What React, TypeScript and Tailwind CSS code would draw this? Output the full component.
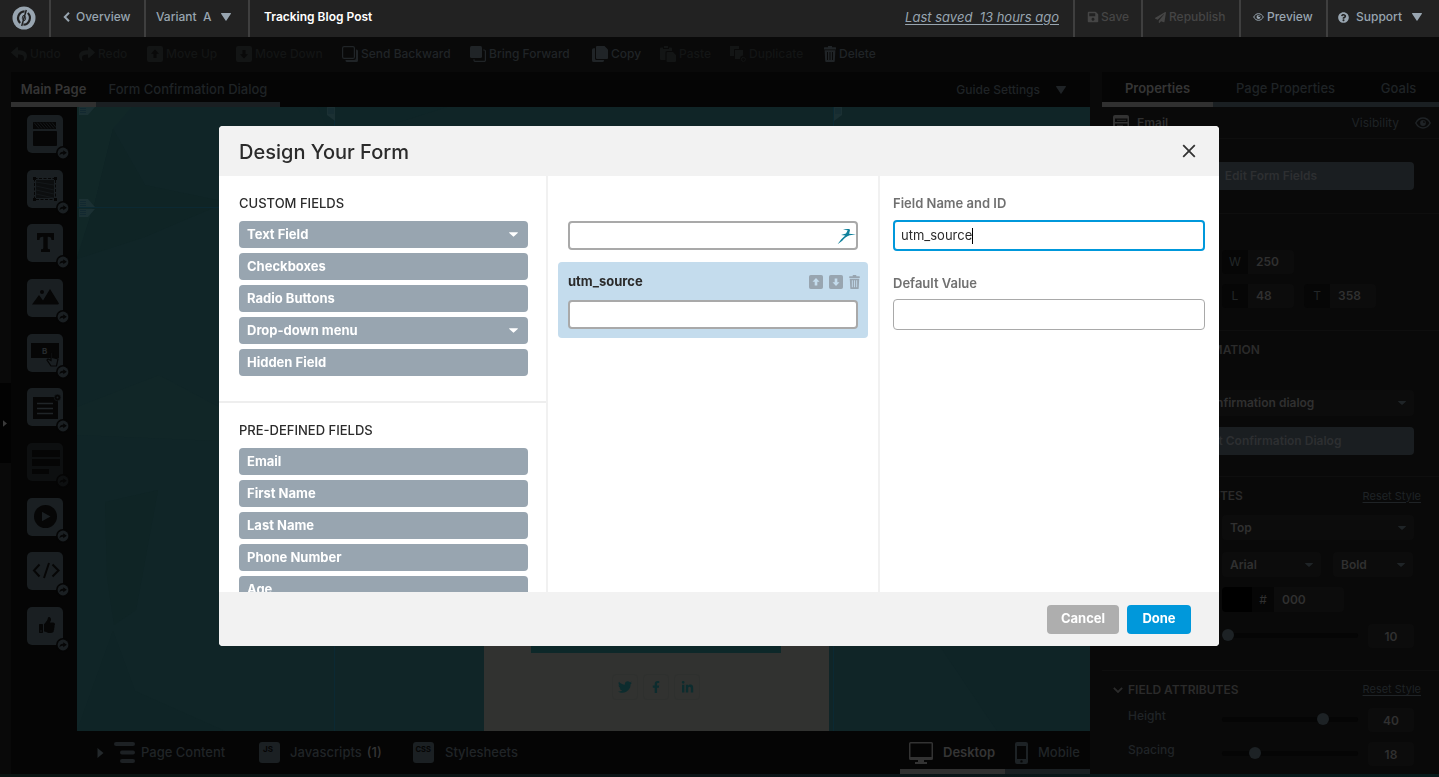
import type { ReactNode } from "react";
import {
  FaFacebookF,
  FaLinkedinIn,
  FaPaperPlane,
  FaQuestionCircle,
  FaReply,
  FaSave,
  FaShare,
  FaThumbsUp,
  FaTwitter,
} from "react-icons/fa";

type IconProps = { className?: string };

const TriangleDown = ({ className = "" }: IconProps) => (
  <svg viewBox="0 0 10 8" className={className} fill="currentColor" aria-hidden="true">
    <path d="M0.5 0h9a.5.5 0 0 1 .4.8L5.6 7.3a.7.7 0 0 1-1.2 0L.1.8A.5.5 0 0 1 .5 0Z" />
  </svg>
);

const CaretDown = ({ className = "" }: IconProps) => (
  <svg viewBox="0 0 10 5" className={className} fill="currentColor" aria-hidden="true">
    <path d="M.6 0h8.8a.5.5 0 0 1 .3.9L5.4 4.8a.6.6 0 0 1-.8 0L.3.9A.5.5 0 0 1 .6 0Z" />
  </svg>
);

const TriangleRight = ({ className = "" }: IconProps) => (
  <svg viewBox="0 0 6 10" className={className} fill="currentColor" aria-hidden="true">
    <path d="M0 0v10l6-5Z" />
  </svg>
);

const Logo = () => (
  <svg viewBox="0 0 24 24" className="size-6" aria-hidden="true">
    <circle cx="12" cy="12" r="11.5" fill="#98a5b0" />
    <path d="M12.6 5.3a6.800 6.800 0 0 0-4.400 11.700M11.400 18.700a6.800 6.800 0 0 0 4.400-11.700" fill="none" stroke="#222" strokeWidth="2.200" />
    <path d="M14.300 4 9.700 20" stroke="#222" strokeWidth="1.500" />
    <path d="M11.800 9c-1.300 1.200-1.800 3-1.200 4.600M12.200 15c1.300-1.200 1.800-3 1.200-4.600" fill="none" stroke="#222" strokeWidth="1" />
  </svg>
);

const Trash = ({ className = "" }: IconProps) => (
  <svg viewBox="0 0 12 16" className={className} fill="currentColor" aria-hidden="true">
    <path d="M4 0h4v1.300h3.500a.5.500 0 0 1 .5.500V3.500H0V1.800a.5.500 0 0 1 .5-.5H4Z" />
    <path fillRule="evenodd" d="M.6 4.300h10.800L10.800 15a1 1 0 0 1-1 1H2.200a1 1 0 0 1-1-1ZM3 6v8h1V6Zm2.500 0v8h1V6ZM8 6v8h1V6Z" />
  </svg>
);

const ArrowBox = ({ className = "", down = false }: IconProps & { down?: boolean }) => (
  <svg viewBox="0 0 16 16" className={className} aria-hidden="true">
    <path
      fill="currentColor"
      fillRule="evenodd"
      d={
        down
          ? "M2 0h12a2 2 0 0 1 2 2v12a2 2 0 0 1-2 2H2a2 2 0 0 1-2-2V2a2 2 0 0 1 2-2Zm4.500 4v4.200H4L8 12.500l4-4.300H9.500V4Z"
          : "M2 0h12a2 2 0 0 1 2 2v12a2 2 0 0 1-2 2H2a2 2 0 0 1-2-2V2a2 2 0 0 1 2-2Zm4.500 12V7.800H4L8 3.500l4 4.300H9.500V12Z"
      }
    />
  </svg>
);

const SendBackward = () => (
  <svg viewBox="0 0 16 16" className="size-4" aria-hidden="true">
    <path d="M14 3.500h.5A1.500 1.500 0 0 1 16 5v9.500a1.500 1.500 0 0 1-1.500 1.500H5a1.500 1.500 0 0 1-1.500-1.500V14H12a2 2 0 0 0 2-2Z" fill="currentColor" />
    <rect x=".6" y=".6" width="11.800" height="11.800" rx="1.500" fill="none" stroke="currentColor" strokeWidth="1.200" />
  </svg>
);

const BringForward = () => (
  <svg viewBox="0 0 16 16" className="size-4" aria-hidden="true">
    <rect width="12" height="12" rx="1.500" fill="currentColor" />
    <path d="M13.200 4h1a1.200 1.200 0 0 1 1.200 1.200v9a1.200 1.200 0 0 1-1.200 1.200h-9A1.200 1.200 0 0 1 4 14.200v-1" fill="none" stroke="currentColor" strokeWidth="1.200" />
  </svg>
);

const CopyIcon = () => (
  <svg viewBox="0 0 16 16" className="size-4" fill="currentColor" aria-hidden="true">
    <path d="M5 0h7.500L16 3.500V12a1 1 0 0 1-1 1H5a1 1 0 0 1-1-1V1a1 1 0 0 1 1-1Z" />
    <path d="M3 2.200H1.500A1.500 1.500 0 0 0 0 3.700v10.800A1.500 1.500 0 0 0 1.500 16h9a1.500 1.500 0 0 0 1.500-1.500V14H4.500A1.500 1.500 0 0 1 3 12.500Z" />
  </svg>
);

const PasteIcon = () => (
  <svg viewBox="0 0 16 16" className="size-4" fill="currentColor" aria-hidden="true">
    <path d="M1 1.500h2V3h6V1.500h2a1 1 0 0 1 1 1V5H7a1.500 1.500 0 0 0-1.500 1.500V14H1a1 1 0 0 1-1-1V2.500a1 1 0 0 1 1-1Z" />
    <path d="M4 0h4v2H4ZM7.500 6H13l3 3v6a1 1 0 0 1-1 1H7.500a1 1 0 0 1-1-1V7a1 1 0 0 1 1-1Z" />
  </svg>
);

const DuplicateIcon = () => (
  <svg viewBox="0 0 16 16" className="size-4" fill="currentColor" aria-hidden="true">
    <path d="M0 0h9v3H5a1 1 0 0 0-1 1v6H0Z" />
    <path d="M5 4h8v5.500A3.500 3.500 0 0 0 10 13H5Z" />
    <circle cx="13.400" cy="13.400" r="2" fill="none" stroke="currentColor" />
  </svg>
);

const EyeIcon = ({ className = "" }: IconProps) => (
  <svg viewBox="0 0 16 12" className={className} aria-hidden="true">
    <path d="M.8 6C2.500 2.800 5 1 8 1s5.500 1.800 7.200 5C13.500 9.200 11 11 8 11S2.500 9.200.8 6Z" fill="none" stroke="currentColor" strokeWidth="1.500" />
    <circle cx="8" cy="6" r="2.900" fill="currentColor" />
    <path d="M8 6V3.800A2.200 2.200 0 0 1 10.200 6Z" fill="#111" />
  </svg>
);

const FormIcon = () => (
  <svg viewBox="0 0 16 16" className="size-4" aria-hidden="true">
    <rect width="16" height="16" rx="2" fill="#333" />
    <path d="M2 3.500h12.500V7H2ZM2 8.500h12.500V12H2Z" fill="#0a0a0a" />
    <path d="M4 5.300h9M4 10.300h6" stroke="#2a2a2a" />
  </svg>
);

const Swallow = () => (
  <svg viewBox="0 0 20 18" className="h-[18px] w-5" fill="#0f819c" aria-hidden="true">
    <path d="M7 2.700c1.800-.7 4-.9 5.900-.7l1.200.8-1 4L20 7.600l-6.400.7c-3 1.200-5.500 3.200-7.300 5.500L1.500 17.300c2.200-3.500 4.800-6.300 7.800-8.900L5 8.100l5-1.700 1.700-3.200c-1.600-.3-3.100-.4-4.700-.5Z" />
  </svg>
);

const barItem = "flex items-center text-xs font-medium";

function TopBar() {
  return (
    <header className="flex h-[37px] items-stretch bg-[#222] text-[#98a5b0]">
      <a href="#home" aria-label="Home" className="flex w-[49px] items-center justify-center pr-px pb-[2px]">
        <Logo />
      </a>
      <a href="#overview" className={`${barItem} w-[95px] gap-[6px] border-l-2 border-[#3f3f3f] pb-[3px] pl-3`}>
        <svg viewBox="0 0 7 10" className="h-[10px] w-[7px]" fill="none" stroke="currentColor" strokeWidth="2" aria-hidden="true">
          <path d="M6 .8 1.800 5 6 9.200" />
        </svg>
        Overview
      </a>
      <button type="button" className={`${barItem} w-[104px] justify-between border-l-2 border-[#3f3f3f] pr-[17px] pb-[3px] pl-[10px]`}>
        <span>Variant&nbsp; A</span>
        <TriangleDown className="h-2 w-[10px]" />
      </button>
      <h1 className="flex items-center border-l-2 border-[#3f3f3f] pb-[3px] pl-[14px] text-xs font-semibold text-white">Tracking Blog Post</h1>
      <div className="flex flex-1 items-center justify-end pr-[14px] pb-[2px]">
        <a href="#history" className="text-[13px] italic underline underline-offset-2">
          Last saved&nbsp; 13 hours ago
        </a>
      </div>
      <button type="button" disabled className={`${barItem} w-[68px] gap-[2px] border-l-2 border-[#3f3f3f] pb-[3px] pl-3 text-[#454545]`}>
        <FaSave className="size-3" />
        Save
      </button>
      <button type="button" disabled className={`${barItem} w-[98px] gap-[3px] border-l-2 border-[#3f3f3f] pb-[3px] pl-3 text-[#454545]`}>
        <FaPaperPlane className="size-[11px]" />
        Republish
      </button>
      <button type="button" className={`${barItem} w-[87px] gap-[3px] border-l-2 border-[#3f3f3f] pb-[3px] pl-3`}>
        <EyeIcon className="h-2 w-[11px]" />
        Preview
      </button>
      <button type="button" className={`${barItem} w-[113px] border-l-2 border-[#3f3f3f] pr-[17px] pb-[3px] pl-[10px]`}>
        <FaQuestionCircle className="size-[11px]" />
        <span className="ml-[7px] flex-1 text-left">Support</span>
        <TriangleDown className="h-2 w-[10px]" />
      </button>
    </header>
  );
}

const actions: { label: string; icon: ReactNode; width: string; off?: boolean }[] = [
  { label: "Undo", icon: <FaReply className="size-4" />, width: "w-[68px]", off: true },
  { label: "Redo", icon: <FaShare className="size-4" />, width: "w-[68px]", off: true },
  { label: "Move Up", icon: <ArrowBox className="size-4" />, width: "w-[89px]", off: true },
  { label: "Move Down", icon: <ArrowBox className="size-4" down />, width: "w-[106px]", off: true },
  { label: "Send Backward", icon: <SendBackward />, width: "w-32" },
  { label: "Bring Forward", icon: <BringForward />, width: "w-[122px]" },
  { label: "Copy", icon: <CopyIcon />, width: "w-[68px]" },
  { label: "Paste", icon: <PasteIcon />, width: "w-[70px]", off: true },
  { label: "Duplicate", icon: <DuplicateIcon />, width: "w-[94px]", off: true },
  { label: "Delete", icon: <Trash className="h-4 w-3" />, width: "w-[68px]" },
];

function ActionBar() {
  return (
    <nav aria-label="Edit" className="flex h-[35px] items-center pb-px pl-[11px]">
      {actions.map((a) => (
        <button
          key={a.label}
          type="button"
          disabled={a.off}
          className={`${a.width} ${a.off ? "text-[#131515]" : "text-[#202427]"} flex shrink-0 items-center gap-[3px] text-xs font-medium whitespace-nowrap`}
        >
          {a.icon}
          {a.label}
        </button>
      ))}
    </nav>
  );
}

const ink = "#060606";
const slate = "#1a1f22";

const tools: { label: string; off?: boolean; art: ReactNode }[] = [
  {
    label: "Section",
    art: (
      <>
        <rect x="6" y="7" width="23" height="7" fill={ink} />
        <path d="m7 7.500 5 6M10 7.500l5 6M13 7.500l5 6M16 7.500l5 6M19 7.500l5 6M22 7.500l5 6M25 7.500l4 5" stroke={slate} strokeWidth=".7" fill="none" />
        <rect x="6" y="16" width="24" height="15" rx="1" fill={ink} />
      </>
    ),
  },
  {
    label: "Box",
    art: (
      <>
        <rect x="9" y="10" width="18" height="18" fill="#0c0e0f" />
        <path d="m9 12 18 3M9 16l18 4M9 20l18 4M9 24l18 4" stroke={slate} strokeWidth=".6" />
        <rect x="7.500" y="8.500" width="21" height="21" fill="none" stroke={ink} strokeDasharray="3 1.500" />
        <path d="M6 7h3v3H6ZM27 7h3v3h-3ZM6 28h3v3H6ZM27 28h3v3h-3Z" fill={ink} />
      </>
    ),
  },
  {
    label: "Text",
    art: <path d="M10 9h17v7h-2.500c-.2-2.200-.8-3.200-3-3.200h-.8V24c0 1 .6 1.300 2.300 1.300V28h-9v-2.700c1.700 0 2.300-.3 2.300-1.300V12.800h-.8c-2.200 0-2.800 1-3 3.200H10Z" fill={ink} />,
  },
  {
    label: "Image",
    art: (
      <>
        <path d="m5 25.500 7-9.500 4 5.500L23 10l9 14.500-1 1Z" fill={ink} />
        <circle cx="15" cy="13" r="2" fill={ink} />
      </>
    ),
  },
  {
    label: "Button",
    art: (
      <>
        <rect x="4" y="9" width="28" height="15" fill={ink} />
        <text x="15" y="20" fontSize="8" fontWeight="700" fill="#262b2e">B</text>
        <path d="M24 18.500v8l-3-1.500-1 1 4 6h5.500l1.500-7-5.500-1.500v-5Z" fill={slate} stroke={ink} strokeWidth="1.200" />
      </>
    ),
  },
  {
    label: "Form",
    art: (
      <>
        <rect x="6" y="9" width="25" height="22" fill={ink} />
        <path d="M10 15.500h16M10 20.500h16M10 25.500h16" stroke="#202528" strokeWidth="1.600" />
        <circle cx="30.500" cy="9.500" r="3.300" fill={ink} stroke={slate} strokeWidth=".6" />
        <circle cx="30.500" cy="9.500" r="1" fill={slate} />
      </>
    ),
  },
  {
    label: "Form fields",
    off: true,
    art: <path d="M5 7h28v7H5ZM5 16h28v7H5ZM5 26h17v5H5Z" fill={ink} />,
  },
  {
    label: "Video",
    art: (
      <>
        <circle cx="18.500" cy="18.500" r="11.500" fill={ink} />
        <path d="M15 13.800v9.400l8.500-4.700Z" fill={slate} />
      </>
    ),
  },
  {
    label: "Custom HTML",
    art: <path d="M12.500 12.500 7 18.500l5.500 6M25.500 12.500l6 6-6 6M22 11l-5 15" stroke={ink} strokeWidth="2" fill="none" />,
  },
  { label: "Social", art: <FaThumbsUp x="12" y="10" width="15" height="16" color={ink} /> },
];

function ToolStrip() {
  return (
    <div className="w-[66px] shrink-0 pt-2 pl-4">
      <ul className="flex h-[530px] flex-col justify-between">
        {tools.map((t) => (
          <li key={t.label} className={`relative w-9 ${t.off ? "opacity-40" : ""}`}>
            <button type="button" aria-label={t.label} className="block h-[38px] w-9">
              <svg viewBox="0 0 36 38" className="h-[38px] w-9">
                <rect width="36" height="38" rx="5" fill={slate} />
                {t.art}
              </svg>
            </button>
            <svg viewBox="0 0 14 14" className="absolute -right-[7px] -bottom-[7px] size-[14px]" aria-hidden="true">
              <circle cx="7" cy="7" r="7" fill="#050505" />
              <circle cx="7" cy="7" r="5.400" fill={slate} />
              <path d="M3.500 9.300c0-2.500 1.500-3.600 3.700-3.600V4.200L10.800 6.800 7.200 9.200V7.800c-1.500 0-2.600.3-3.700 1.500Z" fill={ink} />
            </svg>
          </li>
        ))}
      </ul>
    </div>
  );
}

const GuideFlag = () => (
  <svg viewBox="0 0 16 8" className="h-2 w-4" aria-hidden="true">
    <path d="M0 0h16L9 8H0Z" fill="#1b3033" />
    <path d="M1 1.500h6M1 3.500h6M1 5.500h6" stroke="#122830" />
  </svg>
);

function Canvas() {
  return (
    <div className="relative flex min-w-0 flex-1 justify-center overflow-hidden bg-[#102527]">
      <svg viewBox="0 0 1013 624" preserveAspectRatio="none" className="absolute inset-0 size-full" aria-hidden="true">
        <path d="M0 0h55L36 22 18 95 0 150Z" fill="#112727" />
        <path d="M36 22 68 78 150 95 68 130 0 152 18 95Z" fill="#0f2425" />
        <path d="M0 300 82 268 142 300V334L0 328Z" fill="#112627" />
        <path d="m28 395 53-12-22 120-22 15L30 470Z" fill="#0f2425" />
        <path d="m36 524 22 60 90 40H0Z" fill="#0f2426" />
        <path d="M240 0h130l-60 19h-60Z" fill="#0f2527" />
        <path d="M850 520h163v104H920Z" fill="#0f2426" />
      </svg>
      <div className="absolute inset-x-0 top-[100px] border-t border-[#0b2933]" />
      <div className="absolute top-0 left-[2px]"><GuideFlag /></div>
      <div className="absolute top-[92px] left-[2px] -scale-y-100"><GuideFlag /></div>
      <div className="absolute top-[102px] left-[2px]"><GuideFlag /></div>
      <div className="relative flex w-[500px] flex-col items-end justify-end border-x border-[#0b2933] pr-1">
        <svg viewBox="0 0 8 14" className="absolute top-0 -left-[8px] h-[14px] w-2" aria-hidden="true">
          <path d="M0 0h8v14L0 8Z" fill="#1b3033" />
          <path d="M2 1v6M4 1v6M6 1v6" stroke="#122830" />
        </svg>
        <svg viewBox="0 0 8 14" className="absolute top-0 -right-[9px] h-[14px] w-2" aria-hidden="true">
          <path d="M0 0h8v8L0 14Z" fill="#1b3033" />
          <path d="M2 1v6M4 1v6M6 1v6" stroke="#122830" />
        </svg>
        <section className="flex h-[590px] w-[345px] flex-col items-center bg-[#313230]">
          <div className="mt-[471px] h-[41px] w-[250px] bg-[#0d2829]" />
          <div className="mt-[21px] flex gap-[5px] text-[#0d2c2e]">
            <a href="#twitter" aria-label="Twitter" className="flex size-[26px] items-center justify-center rounded-sm border border-[#2e302e]">
              <FaTwitter className="size-[14px]" />
            </a>
            <a href="#facebook" aria-label="Facebook" className="flex size-[26px] items-center justify-center rounded-sm border border-[#2e302e]">
              <FaFacebookF className="size-3" />
            </a>
            <a href="#linkedin" aria-label="LinkedIn" className="flex size-[26px] items-center justify-center rounded-sm border border-[#2e302e]">
              <FaLinkedinIn className="size-[13px]" />
            </a>
          </div>
        </section>
      </div>
    </div>
  );
}

function BottomBar() {
  return (
    <footer className="flex h-[43px] bg-[#050505] text-[13px] font-medium text-[#202427]">
      <button type="button" className="ml-5 flex w-[162px] items-center">
        <TriangleRight className="h-[10px] w-[7px] text-[#23282b]" />
        <svg viewBox="0 0 22 22" className="mr-[5px] ml-[10px] size-[22px]" fill="#1d2124" aria-hidden="true">
          <rect width="21" height="4" rx="2" />
          <rect x="6" y="8.500" width="15" height="4" rx="2" />
          <rect x="6" y="17" width="15" height="4" rx="2" />
        </svg>
        Page Content
      </button>
      <button type="button" className="flex w-[154px] items-center">
        <svg viewBox="0 0 22 22" className="mr-[9px] size-[22px]" aria-hidden="true">
          <rect width="21" height="21" rx="3" fill="#1b2023" />
          <text x="4" y="10" fontSize="8" fontWeight="700" fill="#050505">JS</text>
        </svg>
        Javascripts <span className="ml-[5px] text-[#353535]">(1)</span>
      </button>
      <button type="button" className="flex items-center">
        <svg viewBox="0 0 22 22" className="mr-[10px] size-[22px]" aria-hidden="true">
          <rect width="21" height="21" rx="3" fill="#1b2023" />
          <text x="2.500" y="9.500" fontSize="7.500" fontWeight="700" fill="#050505">CSS</text>
        </svg>
        Stylesheets
      </button>
      <div role="tablist" aria-label="Device" className="ml-auto flex">
        <button type="button" role="tab" aria-selected="true" className="flex w-[105px] items-center border-b-5 border-[#303030] pt-[6px] pl-[9px] font-semibold text-[#353535]">
          <svg viewBox="0 0 24 22" className="mr-[10px] h-[22px] w-6" aria-hidden="true">
            <path fillRule="evenodd" d="M1.500 0h21A1.500 1.500 0 0 1 24 1.500v15a1.500 1.500 0 0 1-1.500 1.500H15v2h3v2H6v-2h3v-2H1.500A1.500 1.500 0 0 1 0 16.500v-15A1.500 1.500 0 0 1 1.500 0Zm0 1.500V15h21V1.500Z" fill="#333" />
          </svg>
          Desktop
        </button>
        <button type="button" role="tab" aria-selected="false" className="flex w-[85px] items-center border-b-5 border-[#1a1f22] pt-[6px] pl-[10px]">
          <svg viewBox="0 0 13 22" className="mr-[10px] h-[22px] w-[13px]" aria-hidden="true">
            <path fillRule="evenodd" d="M2 0h9a2 2 0 0 1 2 2v18a2 2 0 0 1-2 2H2a2 2 0 0 1-2-2V2a2 2 0 0 1 2-2Zm0 4v13h9V4Zm4.500 14.200a1.200 1.200 0 1 0 0 2.400 1.200 1.200 0 0 0 0-2.400Z" fill="#1d2225" />
          </svg>
          Mobile
        </button>
      </div>
    </footer>
  );
}

function Workspace() {
  return (
    <section className="flex min-w-0 flex-1 flex-col bg-[#050505]">
      <div className="flex h-[35px] items-stretch text-[13px] font-medium">
        <div role="tablist" aria-label="Pages" className="flex">
          <button type="button" role="tab" aria-selected="true" className="w-[85px] border-b-5 border-[#303030] pt-[6px] font-semibold whitespace-nowrap text-[#353535]">
            Main Page
          </button>
          <button type="button" role="tab" aria-selected="false" className="w-[184px] border-b-5 border-[#1a1f22] pt-[6px] whitespace-nowrap text-[#1f2326]">
            Form Confirmation Dialog
          </button>
        </div>
        <button type="button" className="mr-6 ml-auto flex items-center gap-4 text-xs text-[#1f2326]">
          Guide Settings
          <TriangleDown className="h-2 w-[10px]" />
        </button>
      </div>
      <div className="flex flex-1">
        <ToolStrip />
        <div className="flex min-w-0 flex-1 flex-col">
          <Canvas />
          <BottomBar />
        </div>
      </div>
    </section>
  );
}

const fieldBg = "rounded-sm bg-[#0c0c0c]";

function Picker({ label, value, className }: { label: string; value: string; className: string }) {
  return (
    <label className={`relative flex items-center ${className}`}>
      <span className="sr-only">{label}</span>
      <select className={`h-full w-full appearance-none ${fieldBg} pl-2 text-xs font-semibold text-[#303030]`}>
        <option>{value}</option>
      </select>
      <CaretDown className="pointer-events-none absolute right-2 h-1 w-2 text-[#1f2427]" />
    </label>
  );
}

function Measure({ label, value }: { label: string; value: string }) {
  return (
    <label className="flex h-6 w-[72px] text-xs">
      <span className="flex w-[26px] items-center justify-center rounded-l-sm bg-[#060606] text-[#222628]">{label}</span>
      <input defaultValue={value} className="w-[46px] rounded-r-sm bg-[#0c0c0c] pl-2 font-semibold text-[#303030]" />
    </label>
  );
}

function SliderRow({ label, value, min, max }: { label: string; value: number; min: number; max: number }) {
  return (
    <div className="flex h-6 items-center">
      <label htmlFor={`slider-${label}`} className="w-[94px] pb-2 text-xs font-medium text-[#202427]">
        {label}
      </label>
      <input
        id={`slider-${label}`}
        type="range"
        min={min}
        max={max}
        defaultValue={value}
        className="mb-[2px] h-[5px] w-[136px] appearance-none rounded-full bg-[#050505] [&::-webkit-slider-thumb]:size-3 [&::-webkit-slider-thumb]:appearance-none [&::-webkit-slider-thumb]:rounded-full [&::-webkit-slider-thumb]:bg-[#1d2225]"
      />
      <input aria-label={`${label} value`} defaultValue={value} className={`${fieldBg} ml-auto h-6 w-[46px] text-center text-xs font-semibold text-[#303030]`} />
    </div>
  );
}

function SectionTitle({ children, reset = false, height }: { children: ReactNode; reset?: boolean; height: string }) {
  return (
    <div className={`-mr-[7px] -ml-[15px] flex items-center ${height}`}>
      <svg viewBox="0 0 10 6" className="mr-[5px] h-[6px] w-[10px]" fill="none" stroke="#2b2b2b" strokeWidth="1.800" aria-hidden="true">
        <path d="m.8.8 4.200 4.200L9.200.8" />
      </svg>
      <h2 className="text-xs font-semibold text-[#2b2b2b]">{children}</h2>
      {reset && (
        <a href="#reset" className="ml-auto text-[11px] text-[#1f2326] underline underline-offset-2">
          Reset Style
        </a>
      )}
    </div>
  );
}

const sectionBox = "border-b border-[#0e0e0e] pr-[25px] pl-[26px]";
const wideButton = "h-7 w-full rounded-sm bg-[#1a1e21] text-xs font-semibold text-[#2d2f31]";

function PropertiesPanel() {
  return (
    <aside className="w-[337px] shrink-0 bg-[#090909]">
      <div role="tablist" aria-label="Properties" className="flex h-[35px] bg-[#050505] text-[13px] font-medium text-[#1f2326]">
        <button type="button" role="tab" aria-selected="true" className="w-[111px] border-b-5 border-[#303030] pt-1 font-semibold text-[#353535]">
          Properties
        </button>
        <button type="button" role="tab" aria-selected="false" className="w-[145px] border-b-5 border-[#1a1f22] pt-1">
          Page Properties
        </button>
        <button type="button" role="tab" aria-selected="false" className="flex-1 border-b-5 border-[#1a1f22] pt-1">
          Goals
        </button>
      </div>
      <div className="flex h-8 items-center border-b border-[#0e0e0e] pr-2 pl-[11px] text-xs">
        <FormIcon />
        <span className="ml-2 font-semibold text-[#303030]">Email</span>
        <button type="button" className="ml-auto flex items-center gap-4 text-[#1f2326]">
          Visibility
          <EyeIcon className="h-3 w-4" />
        </button>
      </div>
      <section className={`${sectionBox} pt-[23px] pb-[23px]`}>
        <button type="button" className={wideButton}>Edit Form Fields</button>
      </section>
      <section className={`${sectionBox} pb-[22px]`}>
        <SectionTitle height="h-9">GEOMETRY</SectionTitle>
        <div className="flex flex-col gap-[10px] pl-[94px]">
          <Measure label="W" value="250" />
          <div className="flex gap-[10px]">
            <Measure label="L" value="48" />
            <Measure label="T" value="358" />
          </div>
        </div>
      </section>
      <section className={`${sectionBox} pb-[21px]`}>
        <SectionTitle height="h-[38px]">FORM CONFIRMATION</SectionTitle>
        <div className="flex flex-col gap-[11px] pt-[21px]">
          <Picker label="Confirmation" value="Show form confirmation dialog" className="h-[26px]" />
          <button type="button" className={wideButton}>Edit Confirmation Dialog</button>
        </div>
      </section>
      <section className={`${sectionBox} pb-[22px]`}>
        <SectionTitle height="h-[38px]" reset>LABEL ATTRIBUTES</SectionTitle>
        <div className="flex flex-col">
          <div className="pl-[94px]">
            <Picker label="Position" value="Top" className="h-[25px]" />
            <div className="mt-3 flex gap-3">
              <Picker label="Font" value="Arial" className="h-[25px] w-[99px]" />
              <Picker label="Weight" value="Bold" className="h-[25px] w-20" />
            </div>
            <label className="mt-[10px] flex h-[25px] text-xs">
              <span className="w-[30px] rounded-l-sm bg-black" />
              <span className="flex w-[22px] items-center justify-center bg-[#060606] text-[#303030]">#</span>
              <input aria-label="Color" defaultValue="000" className="w-[70px] rounded-r-sm bg-[#0c0c0c] pl-2 font-semibold text-[#303030]" />
            </label>
          </div>
          <div className="mt-3">
            <SliderRow label="Size" value={10} min={10} max={40} />
          </div>
        </div>
      </section>
      <section className="pr-[25px] pl-[26px]">
        <SectionTitle height="h-[37px]" reset>FIELD ATTRIBUTES</SectionTitle>
        <div className="flex flex-col gap-[10px]">
          <SliderRow label="Height" value={40} min={0} max={52} />
          <SliderRow label="Spacing" value={18} min={0} max={82} />
        </div>
      </section>
    </aside>
  );
}

function FieldButtons({ title, items }: { title: string; items: { label: string; menu?: boolean }[] }) {
  return (
    <>
      <h3 className="text-[13px] leading-4 font-medium text-[#2b2b2b]">{title}</h3>
      <ul className="mt-[10px] flex flex-col gap-[5px]">
        {items.map((item) => (
          <li key={item.label}>
            <button type="button" className="flex h-[27px] w-full items-center justify-between rounded-sm bg-[#98a5b0] pr-[10px] pl-2 text-[13px] font-bold text-white">
              {item.label}
              {item.menu && <CaretDown className="h-[5px] w-[9px]" />}
            </button>
          </li>
        ))}
      </ul>
    </>
  );
}

function FormDialog() {
  return (
    <div className="fixed inset-0 flex items-start justify-center pt-[126px] pr-px">
      <div role="dialog" aria-modal="true" aria-labelledby="dialog-title" className="w-[1000px] overflow-hidden rounded-sm bg-white">
        <header className="flex h-[50px] items-center justify-between bg-[#f2f2f2] pr-[23px] pl-5">
          <h2 id="dialog-title" className="pt-[2px] text-xl font-medium text-[#2b2b2b]">Design Your Form</h2>
          <button type="button" aria-label="Close">
            <svg viewBox="0 0 14 14" className="size-[14px]" fill="none" stroke="#333" strokeWidth="1.800" aria-hidden="true">
              <path d="m1.200 1.200 11.600 11.600M12.800 1.200 1.200 12.800" />
            </svg>
          </button>
        </header>
        <div className="flex h-[416px]">
          <div className="w-[329px] overflow-hidden border-r-2 border-[#f1f1f1]">
            <section className="border-b-2 border-[#eee] px-5 pt-[19px] pr-[18px] pb-[25px]">
              <FieldButtons
                title="CUSTOM FIELDS"
                items={[
                  { label: "Text Field", menu: true },
                  { label: "Checkboxes" },
                  { label: "Radio Buttons" },
                  { label: "Drop-down menu", menu: true },
                  { label: "Hidden Field" },
                ]}
              />
            </section>
            <section className="pt-[19px] pr-[18px] pl-5">
              <FieldButtons
                title="PRE-DEFINED FIELDS"
                items={[{ label: "Email" }, { label: "First Name" }, { label: "Last Name" }, { label: "Phone Number" }, { label: "Age" }]}
              />
            </section>
          </div>
          <div className="w-[332px] border-r-2 border-[#f1f1f1] px-[10px] pt-[45px]">
            <div className="mx-[10px] flex h-[29px] items-center rounded-sm border-2 border-[#a9a9a9]">
              <input aria-label="Email" className="h-full min-w-0 flex-1 outline-none" />
              <Swallow />
            </div>
            <div className="mt-3 h-[76px] rounded-sm bg-[#c4dced] px-[10px] pt-3">
              <div className="flex h-4 items-center">
                <label htmlFor="preview-utm" className="text-[13px] font-bold text-[#2b2b2b]">utm_source</label>
                <div className="-mr-[2px] ml-auto flex items-center gap-[6px] text-[#98a5b0]">
                  <button type="button" aria-label="Move up"><ArrowBox className="size-[14px]" /></button>
                  <button type="button" aria-label="Move down"><ArrowBox className="size-[14px]" down /></button>
                  <button type="button" aria-label="Delete field"><Trash className="h-[14px] w-[11px]" /></button>
                </div>
              </div>
              <input id="preview-utm" className="mt-[10px] block h-[29px] w-full rounded-sm border-2 border-[#a9a9a9] bg-white" />
            </div>
          </div>
          <div className="flex-1 pt-[19px] pr-[14px] pl-[13px]">
            <label htmlFor="field-name" className="block text-[13px] leading-4 font-semibold text-[#707070]">Field Name and ID</label>
            <div className="mt-[9px] flex h-[31px] items-center rounded-sm border-2 border-[#0098db] pl-[6px]">
              <input id="field-name" defaultValue="utm_source" className="[field-sizing:content] text-[13px] text-[#2b2b2b] outline-none" />
              <span className="h-4 w-px bg-black" />
            </div>
            <label htmlFor="default-value" className="mt-6 block text-[13px] leading-4 font-semibold text-[#707070]">Default Value</label>
            <input id="default-value" className="mt-2 block h-[31px] w-full rounded-sm border border-[#a9a9a9] px-2 text-[13px]" />
          </div>
        </div>
        <footer className="flex h-[54px] items-center justify-end gap-2 bg-[#f2f2f2] pr-7 text-[13px] font-bold text-white">
          <button type="button" className="h-[29px] w-[72px] rounded-sm bg-[#aeaeae]">Cancel</button>
          <button type="button" className="h-[29px] w-16 rounded-sm bg-[#0098db]">Done</button>
        </footer>
      </div>
    </div>
  );
}

export default function App() {
  return (
    <div className="flex min-h-screen flex-col overflow-hidden bg-[#090909] font-[Inter,'Open_Sans',sans-serif]">
      <TopBar />
      <ActionBar />
      <main className="flex flex-1">
        <div className="flex w-[11px] shrink-0 items-center">
          <button type="button" aria-label="Open side panel" className="flex h-20 w-[11px] items-center bg-[#020202] pl-[3px]">
            <TriangleRight className="h-[9px] w-1 text-[#3a3a3a]" />
          </button>
        </div>
        <Workspace />
        <div className="w-3 shrink-0" />
        <PropertiesPanel />
      </main>
      <div className="h-[3px] bg-gradient-to-r from-[#0a1412] via-[#0c1417] to-[#071a1b]" />
      <FormDialog />
    </div>
  );
}
